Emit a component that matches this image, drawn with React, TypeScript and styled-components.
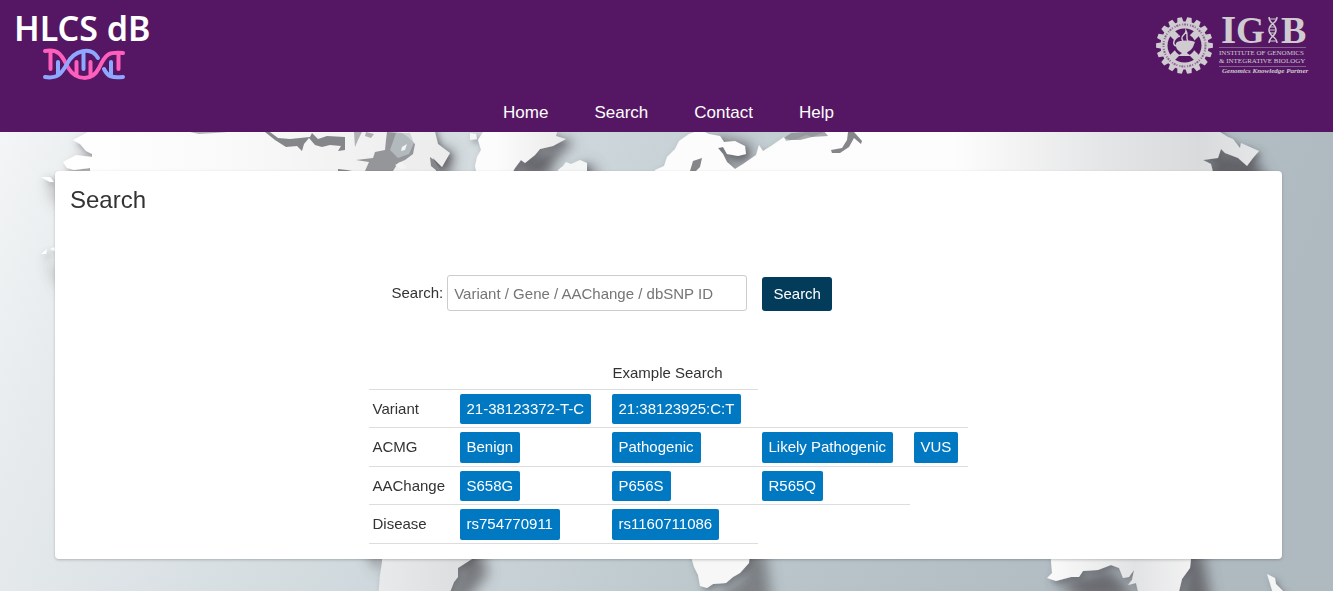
import React, { useState } from "react";
import styled, { createGlobalStyle } from "styled-components";

const GlobalStyle = createGlobalStyle`
  *, *::before, *::after { box-sizing: border-box; }
  html, body, #root { height: 100%; }
  body {
    margin: 0;
    font-family: "Liberation Sans", Arial, sans-serif;
    font-size: 15px;
    line-height: 1.5;
    color: #333;
  }
`;

const Page = styled.div`
  display: flex;
  flex-direction: column;
  min-height: 100%;
`;

const Header = styled.header`
  display: flex;
  flex-direction: column;
  background: #551763;
`;

const LogoBar = styled.div`
  display: flex;
  justify-content: space-between;
  padding: 8px 24px 8px 12px;
`;

const LogoLink = styled.a`
  display: block;
  height: 80px;
  svg { display: block; }
`;

const Nav = styled.nav`
  display: flex;
  justify-content: center;
  gap: 46px;
  padding: 4px 51px 6px 55px;
`;

const NavLink = styled.a`
  font-size: 17px;
  line-height: 26px;
  color: #fff;
  text-decoration: none;
`;

const Main = styled.main`
  position: relative;
  flex: 1;
  padding: 39px 51px 32px 55px;
  overflow: hidden;
`;

const Backdrop = styled.svg`
  position: absolute;
  inset: 0;
  width: 100%;
  height: 100%;
`;

const Card = styled.section`
  position: relative;
  padding: 11px 15px 15px;
  background: #fff;
  border-radius: 4px;
  box-shadow: 0 1px 3px rgba(0, 0, 0, 0.22);
`;

const Title = styled.h1`
  margin: 0;
  font-size: 24px;
  font-weight: 400;
  line-height: 36px;
`;

const Content = styled.div`
  max-width: 600px;
  margin: 57px auto 0;
`;

const SearchForm = styled.form`
  display: flex;
  align-items: center;
  padding-left: 23px;
`;

const Field = styled.input`
  width: 300px;
  height: 36px;
  margin: 0 15px 0 4px;
  padding: 0 6px;
  font: inherit;
  color: #333;
  background: #fff;
  border: 1px solid #ccc;
  border-radius: 3px;
  &::placeholder { color: #757575; opacity: 1; }
`;

const SubmitButton = styled.button`
  align-self: flex-end;
  width: 70px;
  height: 34px;
  padding: 0;
  font: inherit;
  color: #fff;
  background: #033c5a;
  border: 0;
  border-radius: 3px;
  cursor: pointer;
`;

const Examples = styled.table`
  margin-top: 47px;
  width: 599px;
  table-layout: fixed;
  border-collapse: collapse;
`;

const HeadCell = styled.th`
  padding: 4px 5px;
  font-weight: 400;
  text-align: left;
`;

const rule = "1px solid #ddd";

const RowHead = styled.th`
  padding: 4px 4px 3px;
  font-weight: 400;
  text-align: left;
  border-top: ${rule};
  border-bottom: ${rule};
`;

const Cell = styled.td`
  padding: 4px 4px 3px;
  border-top: ${rule};
  border-bottom: ${rule};
`;

const Col = styled.col<{ $width: number }>`
  width: ${(p) => p.$width}px;
`;

const Chip = styled.button`
  display: block;
  padding: 4px 7px;
  font: inherit;
  color: #fff;
  white-space: nowrap;
  background: #0078c2;
  border: 0;
  border-radius: 2px;
  cursor: pointer;
`;

const columns = [87, 152, 150, 152, 58];

const examples = [
  { label: "Variant", values: ["21-38123372-T-C", "21:38123925:C:T"] },
  { label: "ACMG", values: ["Benign", "Pathogenic", "Likely Pathogenic", "VUS"] },
  { label: "AAChange", values: ["S658G", "P656S", "R565Q"] },
  { label: "Disease", values: ["rs754770911", "rs1160711086"] },
];

function HlcsLogo() {
  return (
    <svg width="150" height="80" viewBox="12 8 150 80" role="img" aria-label="HLCS dB">
      <text x="14" y="41" fontFamily="'Noto Sans', sans-serif" fontWeight="600" fontSize="34" fill="#fff">
        HLCS dB
      </text>
      <g fill="none" strokeLinecap="round" strokeWidth="4">
        <g stroke="#ff5fbc">
          <path d="M50.500 52V69M76.500 62V75M90.500 62V76M118.500 53V69" />
          <path d="M45 51C62 48 63 60 69 69C76 80 92 82 99 68C106 53 109 52 123 53" />
        </g>
        <g stroke="#8fa8ff">
          <path d="M58 62V74M83.500 53V69M111 62V75" />
          <path d="M45 77C58 79 61 74 67 64C74 50 91 46 98 58" />
          <path d="M104 69C108 77 112 78 123 77" />
        </g>
      </g>
    </svg>
  );
}

const gearPath = (() => {
  const teeth = 18;
  const points: string[] = [];
  for (let i = 0; i < teeth; i++) {
    const a = (i * 2 * Math.PI) / teeth;
    const at = (r: number, d: number) =>
      `${(1184.5 + r * Math.cos(a + d)).toFixed(2)} ${(45.5 + r * Math.sin(a + d)).toFixed(2)}`;
    points.push(at(24, -0.13), at(28.5, -0.08), at(28.5, 0.08), at(24, 0.13));
  }
  return `M${points.join("L")}Z`;
})();

function IgibLogo() {
  const ink = "#cfcbd0";
  const serif = "'Liberation Serif', 'Times New Roman', serif";
  return (
    <svg width="157" height="80" viewBox="1152 8 157 80" role="img" aria-label="IGIB">
      <path d={gearPath} fill={ink} />
      <circle cx="1184.5" cy="45.500" r="21" fill="none" stroke="#551763" strokeWidth="2" strokeDasharray="1 1 2 1 1 2" opacity="0.55" />
      <circle cx="1184.5" cy="45.500" r="17" fill="#551763" />
      <path d="M1172 33L1197 58M1197 33L1172 58" stroke={ink} strokeWidth="7" />
      <circle cx="1184.5" cy="45" r="11" fill="#551763" />
      <path d="M1176 43C1179 40 1190 40 1195 42L1193 47C1191 51 1188 51 1187 53L1191 56H1178L1182 53C1178 51 1175 48 1176 43Z" fill={ink} />
      <path d="M1183 41C1179 36 1186 35 1186 31C1189 36 1185 38 1188 41M1176 46C1171 44 1175 37 1180 36" fill="none" stroke={ink} strokeWidth="1.500" />
      <g fill={ink} fontFamily={serif}>
        <text x="1221" y="43" fontSize="39" fontWeight="700">I</text>
        <text x="1236" y="43" fontSize="37" fontWeight="700">G</text>
        <text x="1281" y="43" fontSize="38" fontWeight="700">B</text>
        <text x="1219" y="55" fontSize="7">INSTITUTE OF GENOMICS</text>
        <text x="1219" y="63" fontSize="7">&amp; INTEGRATIVE BIOLOGY</text>
        <text x="1222" y="73" fontSize="7" fontStyle="italic" fontWeight="700">Genomics Knowledge Partner</text>
      </g>
      <g fill="none" stroke={ink} strokeWidth="1.500">
        <path d="M1269 17C1269 24 1276 23 1276 30C1276 37 1269 36 1269 43M1277 17C1277 24 1269 23 1269 30C1269 37 1277 36 1277 43" />
        <path d="M1270 19H1276M1270 27H1275M1270 30H1275M1270 33H1275M1270 41H1276" strokeWidth="1" />
        <path d="M1219 47.500H1306M1219 66.500H1306" strokeWidth="1" opacity="0.4" />
      </g>
    </svg>
  );
}

function WorldMap() {
  return (
    <Backdrop viewBox="0 132 1333 459" preserveAspectRatio="xMidYMin slice" aria-hidden="true">
      <defs>
        <linearGradient id="sea" x1="0" y1="0" x2="1" y2="0.150">
          <stop offset="0" stopColor="#f3f5f6" />
          <stop offset="0.12" stopColor="#e6eaec" />
          <stop offset="0.4" stopColor="#d0d9dd" />
          <stop offset="0.7" stopColor="#b9c5ca" />
          <stop offset="1" stopColor="#afbac0" />
        </linearGradient>
        <linearGradient id="west" gradientUnits="userSpaceOnUse" x1="60" y1="0" x2="460" y2="0">
          <stop offset="0" stopColor="#fff" />
          <stop offset="0.4" stopColor="#fafafa" />
          <stop offset="1" stopColor="#ebebec" />
        </linearGradient>
        <linearGradient id="greenland" gradientUnits="userSpaceOnUse" x1="478" y1="0" x2="570" y2="0">
          <stop offset="0.200" stopColor="#fcfcfc" />
          <stop offset="1" stopColor="#e8e8e9" />
        </linearGradient>
        <linearGradient id="east" gradientUnits="userSpaceOnUse" x1="650" y1="0" x2="1260" y2="0">
          <stop offset="0" stopColor="#fcfcfc" />
          <stop offset="0.500" stopColor="#fdfdfd" />
          <stop offset="0.750" stopColor="#e4e5e6" />
          <stop offset="0.900" stopColor="#d9dadb" />
          <stop offset="1" stopColor="#e4e6e7" />
        </linearGradient>
        <linearGradient id="south" gradientUnits="userSpaceOnUse" x1="375" y1="0" x2="465" y2="0">
          <stop offset="0" stopColor="#e9eaeb" />
          <stop offset="1" stopColor="#dcddde" />
        </linearGradient>
        <linearGradient id="australia" gradientUnits="userSpaceOnUse" x1="1050" y1="0" x2="1192" y2="0">
          <stop offset="0" stopColor="#fafafa" />
          <stop offset="0.600" stopColor="#e2e3e4" />
          <stop offset="1" stopColor="#f2f2f3" />
        </linearGradient>
        <filter id="soft" x="-50%" y="-50%" width="200%" height="200%">
          <feGaussianBlur stdDeviation="7" />
        </filter>
        <filter id="edge" x="-20%" y="-20%" width="140%" height="140%">
          <feDropShadow dx="3" dy="3" stdDeviation="3" floodColor="#56565a" floodOpacity="0.6" />
        </filter>
      </defs>
      <rect y="132" width="1333" height="459" fill="url(#sea)" />

      <g fill="#626267" filter="url(#soft)">
        <path d="M80 142L94 152L92 162L84 154ZM52 180L64 196V210L50 190ZM46 256L62 276V292Z" opacity="0.6" />
        <path d="M375 122H397L388 142L404 164L395 178H372ZM425 135L444 150L454 150L450 178H425Z" opacity="0.8" />
        <path d="M505 176L520 160L545 150L566 139L574 142L556 158L548 178Z" />
        <path d="M585 160L598 172V182H582ZM716 135L752 144L752 158L742 170L720 160Z" opacity="0.7" />
        <path d="M1212 148L1252 156L1262 170L1268 186H1205Z" />
        <path d="M455 550H482L488 574L462 606H442L458 577ZM366 550H384L380 572Z" opacity="0.8" />
        <path d="M745 550H765L772 606H702L742 578Z" opacity="0.7" />
        <path d="M1056 583L1110 568L1138 600H1082ZM1190 550H1202L1212 606H1178Z" opacity="0.9" />
      </g>

      <g filter="url(#edge)">
        <path d="M88 120V132L73 140L80 144L86 151L92 154V157L76 155L63 162L67 168L74 170L90 168V185H440L433 158L442 167L450 153L438 144L436 136L432 120Z" fill="url(#west)" />
        <path d="M41 177L50 177L54 182L50 182ZM41 254L47 249L46 254ZM50 249L55 247V251Z" fill="#fff" />
        <path d="M484 120L483 132L478 140L481 150L477 157L475 166L478 180H508L515 168L521 160L525 163L535 155L540 149L553 146L566 139L556 136L557 132H550V120Z" fill="url(#greenland)" />
        <path d="M470 133L476 134L477 139L470 140ZM558 170L563 166L566 162L571 164L580 160L587 163L587 180H560Z" fill="#f4f5f5" />
        <path d="M655 170L664 166L667 157L675 149L679 141L689 134L700 130L709 134L720 136L724 142L735 141L745 146L746 154L738 156L727 154L723 147L718 148L723 154L727 162L735 169L743 164L756 155L759 145L763 151L771 146L784 137L786 141L797 139L806 135L812 137L824 132V120H1220V132L1228 137L1233 139L1240 148L1241 143L1259 151L1253 158L1247 166L1238 158L1225 153L1221 149L1218 158L1203 160L1211 164L1215 180H650Z" fill="url(#east)" />
        <path d="M382 550V562L380 575L378 600H447L454 582L458 577V568L472 559V550Z" fill="url(#south)" />
        <path d="M689 550L694 567L698 575L700 586L707 588L713 584L726 583L733 577L740 573L749 563L750 550Z" fill="#f7f7f7" />
        <path d="M1050 550L1052 573L1047 578L1056 581L1071 577L1079 577L1083 571L1098 570L1111 565L1119 568L1123 578L1129 577L1134 570L1132 580L1128 585L1136 583L1140 600H1177L1182 579L1190 568L1192 550Z" fill="url(#australia)" />
        <path d="M1267 574L1275 578L1276 584L1284 592L1287 600H1275Z" fill="#f3f4f4" />
      </g>

      <g fill="#85868a">
        <path d="M265 132H270L278 138L290 139L310 137L312 133L318 139L327 136L345 137V150L338 151L341 146L330 145L322 147L315 145L309 138L304 144L302 151L297 146L286 147L275 140Z" />
        <path d="M190 132L199 134L215 133L228 132L214 131ZM354 132H362L358 140L355 147ZM366 132L374 134L371 138L365 136Z" opacity="0.6" />
        <path d="M387 132L402 133L408 137L415 144L413 154L405 160L398 163L393 171H382L365 171L369 162L356 160L373 158L375 152L385 150L386 140Z" opacity="0.85" />
        <path d="M338 169L347 170L352 171H338ZM430 157L434 160L439 168L443 171H437L431 166Z" />
        <path d="M690 171L693 161L702 158L700 167L696 171ZM831 150L842 148L847 140L848 132H854L862 141L861 144L854 138L849 147L840 153L832 153Z" />
        <path d="M784 138L791 133L806 132L824 131L828 136L812 137L800 140L790 140Z" opacity="0.7" />
      </g>
      <path d="M396 133H410L414 143L409 154L398 158L390 150Z" fill="#c1c9cc" opacity="0.7" />
      <path d="M402 147L407 144L405 150L401 151ZM395 165L401 162L407 167L402 169Z" fill="#f4f4f4" />
    </Backdrop>
  );
}

export default function App() {
  const [query, setQuery] = useState("");

  return (
    <>
      <GlobalStyle />
      <Page>
        <Header>
          <LogoBar>
            <LogoLink href="#home"><HlcsLogo /></LogoLink>
            <LogoLink href="#igib"><IgibLogo /></LogoLink>
          </LogoBar>
          <Nav>
            {["Home", "Search", "Contact", "Help"].map((item) => (
              <NavLink key={item} href={`#${item.toLowerCase()}`}>{item}</NavLink>
            ))}
          </Nav>
        </Header>
        <Main>
          <WorldMap />
          <Card>
            <Title>Search</Title>
            <Content>
              <SearchForm onSubmit={(e) => e.preventDefault()}>
                <label htmlFor="query">Search:</label>
                <Field
                  id="query"
                  type="text"
                  placeholder="Variant / Gene / AAChange / dbSNP ID"
                  value={query}
                  onChange={(e) => setQuery(e.target.value)}
                />
                <SubmitButton type="submit">Search</SubmitButton>
              </SearchForm>
              <Examples>
                <colgroup>
                  {columns.map((width, i) => <Col key={i} $width={width} />)}
                </colgroup>
                <thead>
                  <tr>
                    <td colSpan={2} />
                    <HeadCell scope="col">Example Search</HeadCell>
                  </tr>
                </thead>
                <tbody>
                  {examples.map((row) => (
                    <tr key={row.label}>
                      <RowHead scope="row">{row.label}</RowHead>
                      {row.values.map((value) => (
                        <Cell key={value}>
                          <Chip type="button" onClick={() => setQuery(value)}>{value}</Chip>
                        </Cell>
                      ))}
                    </tr>
                  ))}
                </tbody>
              </Examples>
            </Content>
          </Card>
        </Main>
      </Page>
    </>
  );
}
